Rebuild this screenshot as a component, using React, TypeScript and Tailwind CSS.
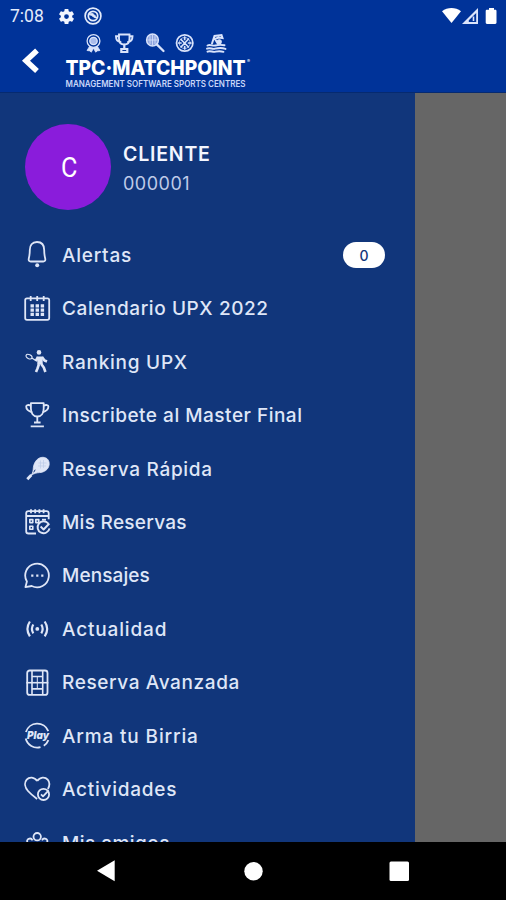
import React from "react";

const icons = {
  bell: (
    <>
      <path d="M14 1C9 1 6.8 4.5 6.8 9c0 4.200-.5 6.500-1 8.500-.5 2 .4 3 2 3h12.400c1.600 0 2.500-1 2-3-.5-2-1-4.300-1-8.500C21.200 4.500 19 1 14 1Z" />
      <circle cx="14.200" cy="24.300" r="2" fill="currentColor" stroke="none" />
    </>
  ),
  calendar: (
    <>
      <rect x="2.200" y="4.300" width="24" height="21.500" rx="1.800" />
      <path d="M7.700 2v5M14.200 2v5M20.700 2v5" />
      <path d="M9.200 10.200v12M14.300 10.200v12M19.400 10.200v12" strokeWidth="3.400" strokeDasharray="3.300 1" />
    </>
  ),
  player: (
    <>
      <ellipse cx="6" cy="8.600" rx="3.200" ry="2" transform="rotate(25 6 8.600)" strokeWidth="1.100" />
      <path d="M8.800 10l4.800 3" strokeWidth="1.300" />
      <circle cx="16" cy="4.400" r="2.300" fill="currentColor" stroke="none" />
      <path d="M17 8.500v8" strokeWidth="5.400" />
      <path d="M15 9l-2.200 4M19 9l2.500 3.500 2.500 1M16 16l-1.500 4.500-1.500 3.500M18.200 16l2.600 3.500 1.600 4.500" strokeWidth="2.600" />
    </>
  ),
  trophy: (
    <>
      <path d="M7.900 2.200h12.800v5.300c0 4.500-2.200 8-6.400 8s-6.400-3.500-6.400-8Z" />
      <path d="M8 4.600c-2.500-1-4.800-.7-4.800 1 0 2.700 2.500 4.800 6 5.700M20.600 4.600c2.500-1 4.800-.7 4.800 1 0 2.700-2.500 4.800-6 5.700M14.300 15.500v5.300M11 21.500h6.600M7.700 25.300h13.200" />
    </>
  ),
  racket: (
    <>
      <path d="M4.300 24.200l4-4.200" strokeWidth="2.800" />
      <path d="M8 20.500c2.500-3.500 2-5.500 2.400-8.300C11.300 6.500 15 2.300 19.800 2.300c4.500 0 7 3.600 6.300 7.700-.9 4.700-4.800 7.300-9.700 7.600-3 .2-5.300.8-8.400 2.900Z" fill="currentColor" strokeWidth=".8" />
      <path d="M15.500 8h8M15 11h8M17.500 5.500v8M20.500 5v8" stroke="#bccae6" strokeWidth=".7" />
      <path d="M10.700 17.300l1.500-2.600" stroke="#11367b" strokeWidth="1" />
    </>
  ),
  bookings: (
    <>
      <path d="M13 25.500H5.500c-1.500 0-2.300-.8-2.300-2.300V5.300c0-1.500.8-2.100 2.300-2.100h18c1.500 0 2.200.6 2.200 2.100v6M3.200 8h22.500M8 1.200v4M12.200 1.200v4M16.400 1.200v4M20.600 1.200v4" strokeWidth="1.800" />
      <rect x="6.800" y="11.600" width="3" height="3" strokeWidth="1.600" />
      <rect x="12.800" y="11.600" width="3" height="3" strokeWidth="1.600" />
      <rect x="6.800" y="18.300" width="3" height="3" strokeWidth="1.600" />
      <path d="M19 11.700h4" />
      <path d="M25.300 15.500a6 6 0 1 0 1.200 4.800M17.600 18.500l3 3 5.700-6" strokeWidth="1.900" />
    </>
  ),
  chat: (
    <>
      <path d="M3.900 19.500A11.800 11.800 0 1 1 8.700 24l-6.300 1.200Z" />
      <path d="M8.200 13.600h2.200M13.200 13.600h2.200M18.200 13.600h2.200" strokeWidth="2.200" />
    </>
  ),
  live: (
    <>
      <path d="M6.900 6.500c-3 4.500-3 10.300 0 14.800M21.700 6.500c3 4.500 3 10.300 0 14.800M10.300 9.500c-1.700 2.700-1.700 6.100 0 8.800M18.300 9.500c1.700 2.700 1.700 6.100 0 8.800" strokeWidth="2.200" />
      <circle cx="14.300" cy="13.900" r="1.900" fill="currentColor" stroke="none" />
    </>
  ),
  court: (
    <>
      <rect x="4.200" y="1.500" width="20.300" height="24.400" rx="2.500" />
      <path d="M9 1.500v24.400M19.700 1.500v24.400M9 7.500h10.700M9 19.900h10.700" strokeWidth="1.600" />
      <path d="M14.300 7.500v12.400" strokeWidth="1" />
      <path d="M3.300 13.700h22" strokeWidth="1.600" />
    </>
  ),
  play: (
    <>
      <path d="M25.300 9.100A11.900 11.900 0 0 0 2.900 10M2.700 16.500a11.900 11.900 0 0 0 14.800 8.600M20.800 23.700a11.900 11.900 0 0 0 4.600-5.600" />
      <text x="4" y="16.900" textLength="22" lengthAdjust="spacingAndGlyphs" fontSize="10.500" fontWeight="900" fontStyle="italic" fill="currentColor" stroke="none">
        Play
      </text>
    </>
  ),
  heart: (
    <>
      <path d="M14.200 6.100C11.400 1.700 6.300 1.600 3.700 4.600 1 7.800 1.900 12.500 5 16c2.700 3 5.300 5.100 9.100 8M14.200 6.100c2.800-4.400 7.900-4.500 10.500-1.500 2.200 2.600 2 6.200.2 9.400" />
      <circle cx="20.500" cy="19.400" r="5.600" />
      <path d="M18 19.300l2 2 5.700-6" />
    </>
  ),
  friends: (
    <>
      <circle cx="14.200" cy="7.700" r="3.700" />
      <path d="M4.500 13.500c-1.800-3.500 3.300-5.500 5-2.200M24 13.500c1.800-3.500-3.300-5.500-5-2.200" />
      <path d="M8 23c0-5 2.500-8 6.200-8s6.200 3 6.200 8" />
    </>
  ),
};

const menuItems: { label: string; icon: keyof typeof icons; tracking: string; badge?: number }[] = [
  { label: "Alertas", icon: "bell", tracking: "tracking-[0.750px]", badge: 0 },
  { label: "Calendario UPX 2022", icon: "calendar", tracking: "tracking-[0.580px]" },
  { label: "Ranking UPX", icon: "player", tracking: "tracking-[0.750px]" },
  { label: "Inscribete al Master Final", icon: "trophy", tracking: "tracking-[0.500px]" },
  { label: "Reserva Rápida", icon: "racket", tracking: "tracking-[0.700px]" },
  { label: "Mis Reservas", icon: "bookings", tracking: "tracking-[0.280px]" },
  { label: "Mensajes", icon: "chat", tracking: "tracking-[0.100px]" },
  { label: "Actualidad", icon: "live", tracking: "tracking-[0.850px]" },
  { label: "Reserva Avanzada", icon: "court", tracking: "tracking-[0.620px]" },
  { label: "Arma tu Birria", icon: "play", tracking: "tracking-[0.850px]" },
  { label: "Actividades", icon: "heart", tracking: "tracking-[0.750px]" },
  { label: "Mis amigos", icon: "friends", tracking: "tracking-[0.450px]" },
];

function StatusBar() {
  return (
    <div className="flex h-8 items-center pl-[10px] pr-[8px]">
      <span className="w-[47px] pt-px font-[Roboto,sans-serif] text-[17.500px] leading-none text-[#e3ebfb]">7:08</span>
      <svg viewBox="0 0 24 24" className="h-[19px] w-[19px]" fill="#f3f6ff">
        <path d="M19.140 12.940c.04-.3.060-.61.060-.94s-.02-.64-.07-.94l2.030-1.580a.49.490 0 0 0 .12-.61l-1.920-3.320a.49.490 0 0 0-.59-.22l-2.390.96a7 7 0 0 0-1.620-.94l-.36-2.540a.48.480 0 0 0-.48-.41h-3.840a.48.480 0 0 0-.47.410l-.36 2.540c-.59.240-1.130.57-1.620.94l-2.390-.96a.48.480 0 0 0-.59.220L2.740 8.870a.48.480 0 0 0 .12.610l2.030 1.580a6 6 0 0 0 0 1.880l-2.030 1.580a.49.490 0 0 0-.12.610l1.920 3.320c.12.220.37.290.59.220l2.390-.96c.5.380 1.030.7 1.620.94l.36 2.540c.05.240.24.410.48.410h3.840c.24 0 .44-.17.470-.41l.36-2.540a7 7 0 0 0 1.620-.94l2.390.96c.22.080.47 0 .59-.22l1.920-3.320a.48.480 0 0 0-.12-.61ZM12 15a3 3 0 1 1 0-6 3 3 0 0 1 0 6Z" />
      </svg>
      <svg viewBox="0 0 18 18" className="ml-[8px] mb-px h-[18px] w-[18px]" fill="none" stroke="#e3ebfb" strokeWidth="1.700">
        <circle cx="9" cy="9" r="7.900" />
        <circle cx="9" cy="9" r="4.700" />
        <path d="M4.800 7.500c2-2.500 5-1.500 8 3.500-3 .5-4-3-8-3.500Z" fill="#e3ebfb" strokeWidth=".9" />
      </svg>
      <svg viewBox="0 0 56 20" className="mb-px ml-auto h-5 w-[56px]" fill="#fff">
        <path d="M0 5.200C5.500.8 13.500.8 19 5.200L9.500 17Z" />
        <path d="M36 2v16H20Zm-1.800 5v9h-7.400V14.200Z" fillRule="evenodd" fill="#dce5fb" />
        <path d="M31.500 10.500v4.500" stroke="#dce5fb" strokeWidth="1.600" />
        <path d="M45 3.800h2V2h5v1.800h1.200c.8 0 1.300.5 1.300 1.300V16.500c0 .9-.5 1.400-1.300 1.400h-8.200c-.8 0-1.300-.5-1.300-1.400V5.100c0-.8.500-1.300 1.300-1.300Z" />
      </svg>
    </div>
  );
}

function Logo() {
  return (
    <svg viewBox="0 0 190 59" className="h-[59px] w-[190px] shrink-0 overflow-visible font-[Inter,sans-serif]" fill="none" stroke="#d9e3fb" strokeWidth="1.300" strokeLinecap="round">
      {/* medal */}
      <circle cx="30.500" cy="9" r="6.400" />
      <circle cx="30.500" cy="9" r="3.700" fill="#a9bbea" />
      <path d="M26.500 14.500l-2.500 4 2.800.4 1.500 1.300 2.200-4 2.200 4 1.500-1.300 2.800-.4-2.500-4-4 1.500Z" fill="#d9e3fb" strokeWidth=".8" />
      {/* cup */}
      <path d="M56 2.500h10.500v4.300c0 3.400-1.800 5.800-5.200 5.800S56 10.200 56 6.800ZM56 4.200h-3c0 3.600 1.500 5.500 4.500 5.700M66.500 4.200h3c0 3.600-1.500 5.500-4.500 5.700" strokeWidth="1.900" />
      <path d="M61.300 12.600v4.400M58.300 17h6v3h-6Z" strokeWidth="2.200" />
      {/* racket */}
      <circle cx="89.500" cy="8" r="5.900" fill="#8da3de" strokeWidth="1.500" />
      <path d="M87 4.500v7M89.500 3v10M92 4.500v7M85 8h9" strokeWidth=".8" />
      <path d="M94 12.600l6.500 6.400" strokeWidth="2.300" />
      {/* ball */}
      <circle cx="121.700" cy="11" r="8.200" strokeWidth="1.700" />
      <circle cx="121.700" cy="11" r="5.500" strokeWidth=".7" />
      <path d="M118 7.500l7.500 7.500M125.500 7l-7.500 8M121.700 5v2.500M121.700 14.500V17M115.500 11h2.500M125.500 11h2.500" strokeWidth="1.700" />
      {/* swimmer */}
      <circle cx="156.300" cy="9.700" r="1.900" fill="#d9e3fb" />
      <path d="M149 11.500l2.500-7.500 7-1 1 3-4-.5-3.500 1.500 3 5" strokeWidth="2" />
      <path d="M144.500 13.500c3-1.500 5 .8 8 0s5-1 9-.2M144 16.700c3-1.500 5 .8 8 0s6-1.500 10.500.2M144.500 19.700c3-1.500 5 .8 8 0s5-.8 8 .1" strokeWidth="1.900" />
      <g fill="#fff" stroke="none">
        <text x="2.500" y="42.500" textLength="180" lengthAdjust="spacingAndGlyphs" fontSize="20.500" fontWeight="800">
          TPC·MATCHPOINT
        </text>
        <text x="184" y="31" fontSize="4.500">
          ®
        </text>
        <text x="2.500" y="55" textLength="180" lengthAdjust="spacingAndGlyphs" fontSize="8.800" fontWeight="600" fill="#c9d6f8">
          MANAGEMENT SOFTWARE SPORTS CENTRES
        </text>
      </g>
    </svg>
  );
}

function NavigationBar() {
  return (
    <div className="h-[58px] shrink-0 bg-black">
      <svg viewBox="0 0 506 58" className="h-[58px] w-full" fill="#fff">
        <path d="M97 28.700l17.700-10.400v20.900Z" />
        <circle cx="253.500" cy="29.200" r="9.200" />
        <rect x="389.500" y="19.500" width="19.500" height="19.500" rx="1.500" />
      </svg>
    </div>
  );
}

export default function App() {
  return (
    <main className="flex h-[900px] w-[506px] flex-col overflow-hidden bg-[#666666] font-[Inter,sans-serif]">
      <header className="h-[93px] shrink-0 border-b border-[#062a70] bg-[#003399]">
        <StatusBar />
        <div className="flex items-start">
          <button type="button" aria-label="Volver" className="ml-[21px] mt-[15px]">
            <svg viewBox="0 0 20 28" className="h-7 w-5" fill="none" stroke="#fff" strokeWidth="5.500">
              <path d="M16 3.500L5 13.800 16 24" />
            </svg>
          </button>
          <div className="ml-[22px]">
            <Logo />
          </div>
        </div>
      </header>

      <aside className="min-h-0 w-[415px] flex-1 overflow-hidden bg-[#11367b]">
        <div className="flex items-center pl-[25px] pt-[31px]">
          <div className="flex size-[86px] items-center justify-center rounded-full bg-[#8a1cdb] pl-[2px] pt-[2px] font-[Roboto,sans-serif] text-[28px] text-white">
            <span className="scale-x-90">C</span>
          </div>
          <div className="ml-[12px] pt-[3px]">
            <p className="text-[19.500px] font-semibold leading-[29px] tracking-[0.800px] text-[#f3f6ff]">CLIENTE</p>
            <p className="text-[18px] leading-[29px] tracking-[0.500px] text-[#bfcbe8]">000001</p>
          </div>
        </div>

        <ul className="pt-[18.300px]">
          {menuItems.map((item) => (
            <li key={item.label} className="flex h-[53.450px] items-center pl-[23px] pr-[30px] text-[#dfe6f7]">
              <svg viewBox="0 0 28 28" className="size-7 shrink-0" fill="none" stroke="currentColor" strokeWidth="1.800" strokeLinejoin="round">
                {icons[item.icon]}
              </svg>
              <span className={`ml-[11px] whitespace-nowrap pt-[2px] text-[19px] font-medium ${item.tracking}`}>{item.label}</span>
              {item.badge !== undefined && (
                <span className="ml-auto flex h-[26px] w-[42px] items-center justify-center rounded-full bg-white text-[14px] font-medium text-[#11367b]">
                  {item.badge}
                </span>
              )}
            </li>
          ))}
        </ul>
      </aside>

      <NavigationBar />
    </main>
  );
}
